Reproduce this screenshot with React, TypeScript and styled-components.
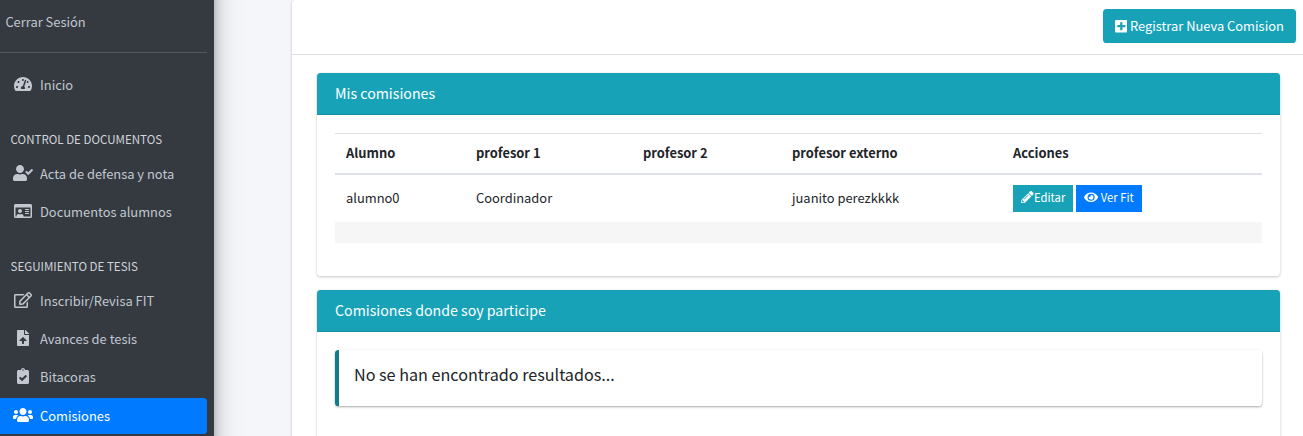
import React from "react";
import styled, { createGlobalStyle, css } from "styled-components";
import {
  FaTachometerAlt, FaUserCheck, FaRegIdCard, FaRegEdit, FaFileUpload,
  FaClipboardCheck, FaUsers, FaPlusSquare, FaPencilAlt, FaEye,
} from "react-icons/fa";

const GlobalStyle = createGlobalStyle`
  *, *::before, *::after { box-sizing: border-box; }
  body {
    margin: 0;
    font-family: "Noto Sans CJK SC", "Noto Sans", sans-serif;
    font-size: 12.9px;
    line-height: 21.6px;
    color: #212529;
    background: #f4f6f9;
    overflow: hidden;
  }
`;

const Shell = styled.div`
  display: flex;
  height: 436px;
  overflow: hidden;
`;

/* Runs past the top edge so that its side shadow is even over the full height. */
const Sidebar = styled.aside`
  flex: 0 0 214px;
  height: 560px;
  margin-top: -60px;
  padding: 60px 7px 0 0;
  background: #343a40;
  color: #c2c7d0;
  box-shadow: 0 12.6px 25.2px rgba(0, 0, 0, 0.25), 0 9px 9px rgba(0, 0, 0, 0.22);
`;

const Logout = styled.div`
  height: 53px;
  padding: 11px 0 0 5.4px;
  border-bottom: 1px solid #4f5962;
`;

const Nav = styled.nav`
  display: flex;
  flex-direction: column;
  gap: 2.4px;
  padding-top: 14px;
`;

const NavHeader = styled.div<{ $height: number }>`
  height: ${({ $height }) => $height}px;
  padding: 24.4px 0 0 10.6px;
  font-size: 11.55px;
  line-height: 18px;
  color: #d0d4db;
`;

const NavLink = styled.a<{ $active?: boolean }>`
  display: flex;
  align-items: center;
  height: 36px;
  padding: 0 0 1.2px 11px;
  border-radius: 0 3.6px 3.6px 0;
  ${({ $active }) => $active && css`
    background: #007bff;
    color: #fff;
  `}
`;

const NavIcon = styled.span<{ $width: number }>`
  display: flex;
  justify-content: center;
  width: 24px;
  margin: 0 5px 1.7px 0;

  svg {
    flex: none;
    width: ${({ $width }) => $width}px;
    height: 16px;
  }
`;

const ButtonIcon = styled.span<{ $width: number; $height: number; $lift: number }>`
  display: flex;
  margin-bottom: ${({ $lift }) => $lift}px;

  svg {
    flex: none;
    width: ${({ $width }) => $width}px;
    height: ${({ $height }) => $height}px;
  }
`;

const Main = styled.main`
  flex: 1;
  margin-left: 78px;
  height: 500px;
  background: #fff;
  border-top-left-radius: 3px;
  box-shadow: 0 0 1px rgba(0, 0, 0, 0.125), 0 1px 3px rgba(0, 0, 0, 0.2);
`;

const Toolbar = styled.header`
  display: flex;
  justify-content: flex-end;
  height: 55px;
  padding: 9px 7px 0 0;
  border-bottom: 1px solid #dfdfdf;
`;

const PrimaryButton = styled.button`
  display: flex;
  align-items: center;
  gap: 2.8px;
  height: 34px;
  width: 193px;
  padding: 0 0 0 11.5px;
  border: 0;
  border-radius: 3.6px;
  background: #17a2b8;
  color: #fff;
  font: inherit;
  white-space: nowrap;
`;

const Content = styled.div`
  display: flex;
  flex-direction: column;
  gap: 14px;
  padding: 18px 23px 0 25px;
`;

const Card = styled.section<{ $height: number }>`
  height: ${({ $height }) => $height}px;
  border-radius: 3.6px;
  background: #fff;
  box-shadow: 0 0 1px rgba(0, 0, 0, 0.125), 0 1px 3px rgba(0, 0, 0, 0.2);
`;

const CardHeader = styled.h3`
  height: 42px;
  margin: 0;
  padding: 10px 18px 0;
  border-bottom: 1px solid rgba(0, 0, 0, 0.125);
  border-radius: 3.6px 3.6px 0 0;
  background: #17a2b8;
  color: #fff;
  font-size: 14.2px;
  font-weight: 400;
`;

const CardBody = styled.div`
  padding: 18px;
`;

const Table = styled.table`
  width: 100%;
  table-layout: fixed;
  border-collapse: collapse;
`;

const HeadCell = styled.th`
  height: 40px;
  padding: 0 11px;
  border-top: 1px solid #dee2e6;
  border-bottom: 2px solid #dee2e6;
  text-align: left;
  font-weight: 700;
`;

const Cell = styled.td`
  height: 48px;
  padding: 0 11px;
`;

const StripeCell = styled.td`
  height: 21px;
  padding: 0;
  background: #f6f6f6;
`;

const Actions = styled.div`
  display: flex;
  gap: 3px;
`;

const SmallButton = styled.button<{ $color: string; $width: number; $gap: number }>`
  display: flex;
  align-items: center;
  gap: ${({ $gap }) => $gap}px;
  width: ${({ $width }) => $width}px;
  height: 27px;
  padding: 0 0 0 8px;
  border: 0;
  background: ${({ $color }) => $color};
  color: #fff;
  font: inherit;
  font-size: 11.3px;
  white-space: nowrap;
`;

const Callout = styled.div`
  height: 56px;
  padding: 14px 15px;
  border-left: 4px solid #117a8b;
  border-radius: 3.6px;
  background: #fff;
  box-shadow: 0 1px 3px rgba(0, 0, 0, 0.12), 0 1px 2px rgba(0, 0, 0, 0.24);
  font-size: 16.15px;
`;

const columns = [
  { title: "Alumno", width: 130 },
  { title: "profesor 1", width: 167 },
  { title: "profesor 2", width: 149 },
  { title: "profesor externo", width: 221 },
  { title: "Acciones", width: 260 },
];

type ItemProps = { icon: React.ReactNode; iconWidth: number; label: string; active?: boolean };

const Item = ({ icon, iconWidth, label, active }: ItemProps) => (
  <NavLink $active={active}>
    <NavIcon $width={iconWidth}>{icon}</NavIcon>
    <span>{label}</span>
  </NavLink>
);

export default function App() {
  return (
    <>
      <GlobalStyle />
      <Shell>
        <Sidebar>
          <Logout>Cerrar Sesión</Logout>
          <Nav>
            <Item icon={<FaTachometerAlt />} iconWidth={18} label="Inicio" />
            <NavHeader $height={48.2}>CONTROL DE DOCUMENTOS</NavHeader>
            <Item icon={<FaUserCheck />} iconWidth={20} label="Acta de defensa y nota" />
            <Item icon={<FaRegIdCard />} iconWidth={18} label="Documentos alumnos" />
            <NavHeader $height={47.8}>SEGUIMIENTO DE TESIS</NavHeader>
            <Item icon={<FaRegEdit />} iconWidth={18} label="Inscribir/Revisa FIT" />
            <Item icon={<FaFileUpload />} iconWidth={12} label="Avances de tesis" />
            <Item icon={<FaClipboardCheck />} iconWidth={12} label="Bitacoras" />
            <Item icon={<FaUsers />} iconWidth={20} label="Comisiones" active />
          </Nav>
        </Sidebar>
        <Main>
          <Toolbar>
            <PrimaryButton>
              <ButtonIcon $width={12.6} $height={14.4} $lift={0.6}><FaPlusSquare /></ButtonIcon>
              <span>Registrar Nueva Comision</span>
            </PrimaryButton>
          </Toolbar>
          <Content>
            <Card $height={203}>
              <CardHeader>Mis comisiones</CardHeader>
              <CardBody>
                <Table>
                  <colgroup>
                    {columns.map((c) => <col key={c.title} width={c.width} />)}
                  </colgroup>
                  <thead>
                    <tr>{columns.map((c) => <HeadCell key={c.title}>{c.title}</HeadCell>)}</tr>
                  </thead>
                  <tbody>
                    <tr>
                      <Cell>alumno0</Cell>
                      <Cell>Coordinador</Cell>
                      <Cell />
                      <Cell>juanito perezkkkk</Cell>
                      <Cell>
                        <Actions>
                          <SmallButton $color="#17a2b8" $width={60} $gap={0.3}>
                            <ButtonIcon $width={12.6} $height={12.6} $lift={2.2}><FaPencilAlt /></ButtonIcon>
                            <span>Editar</span>
                          </SmallButton>
                          <SmallButton $color="#007bff" $width={66} $gap={2.6}>
                            <ButtonIcon $width={14.2} $height={12.6} $lift={2.2}><FaEye /></ButtonIcon>
                            <span>Ver Fit</span>
                          </SmallButton>
                        </Actions>
                      </Cell>
                    </tr>
                    <tr><StripeCell colSpan={5} /></tr>
                  </tbody>
                </Table>
              </CardBody>
            </Card>
            <Card $height={180}>
              <CardHeader>Comisiones donde soy participe</CardHeader>
              <CardBody>
                <Callout>No se han encontrado resultados...</Callout>
              </CardBody>
            </Card>
          </Content>
        </Main>
      </Shell>
    </>
  );
}
